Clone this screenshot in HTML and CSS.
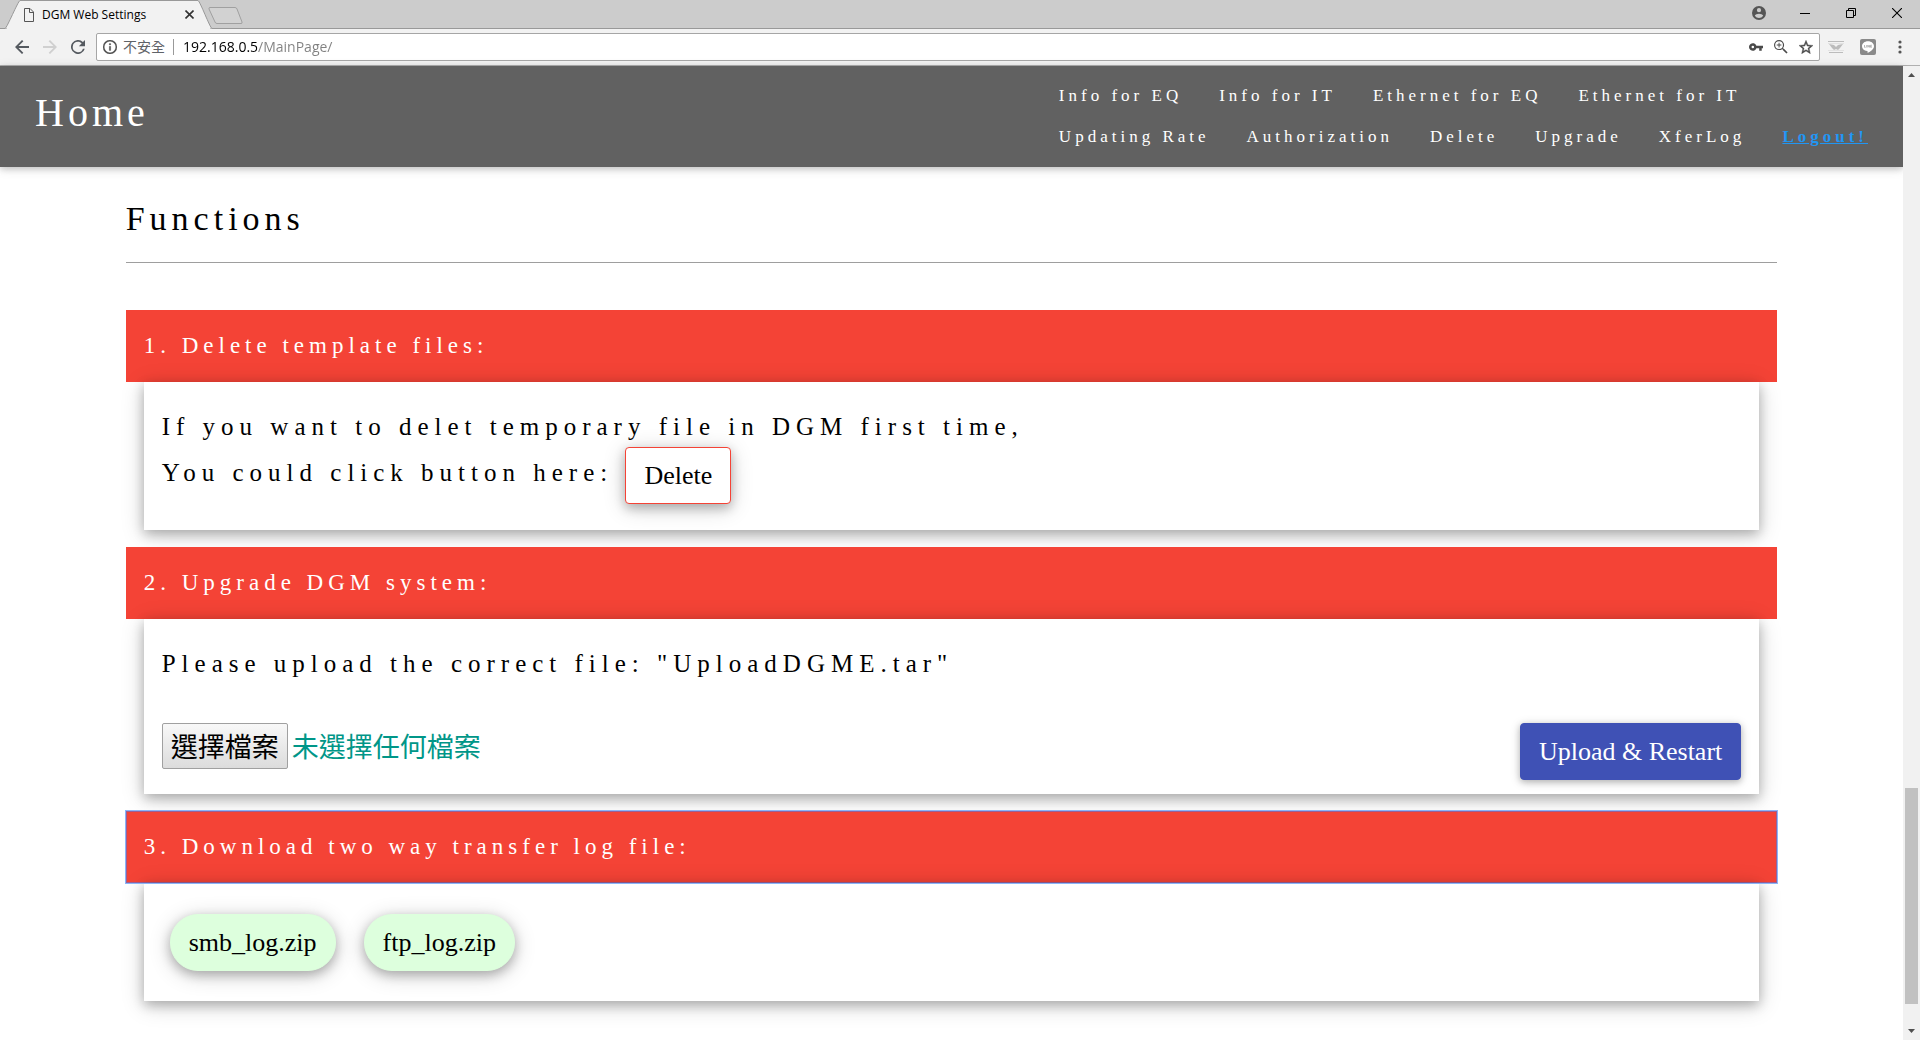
FILE: index.html
```html
<!DOCTYPE html>
<html lang="en">
<head>
<meta charset="utf-8">
<title>DGM Web Settings</title>
<link rel="stylesheet" href="styles.css">
</head>
<body>
<div class="tabstrip">
  <div class="tab">
    <svg class="tab-shape" width="207" height="29" viewBox="0 0 207 29"><path d="M0 28.500C2 28 13 1 15 .500H193C195 1 205 28 207 28.500" fill="#f2f2f2" stroke="#999"/><path d="M2 28.500H205" stroke="#f2f2f2"/></svg>
    <svg class="tab-page" width="12" height="14" viewBox="0 0 12 14" fill="none" stroke="#555"><path d="M1.500.500H7L10.500 4V13.500H1.500ZM6.500.500V4.500H10.500"/></svg>
    <span class="tab-title">DGM Web Settings</span>
    <button class="icon-btn tab-close" aria-label="Close tab"><svg width="9" height="9" viewBox="0 0 9 9" stroke="#333" stroke-width="1.600"><path d="M.5.500 8.500 8.500M8.500.500.5 8.500"/></svg></button>
  </div>
  <button class="icon-btn new-tab" aria-label="New tab"><svg width="36" height="18" viewBox="0 0 36 18"><path d="M2 .500H27Q28.500.500 29 2L34 15Q34.500 16.500 33 16.500H9Q7.500 16.500 7 15L1 2Q.500.500 2 .500Z" fill="#d2d2d2" stroke="#a0a0a0"/></svg></button>
  <div class="window-controls">
    <button class="icon-btn" aria-label="Profile"><svg width="14" height="14" viewBox="2 2 20 20" fill="#555"><path d="M12 2a10 10 0 1 0 0 20 10 10 0 0 0 0-20zm0 3a3 3 0 1 1 0 6 3 3 0 0 1 0-6zm0 14.200a7.200 7.200 0 0 1-6-3.220c.03-1.990 4-3.080 6-3.080s5.970 1.090 6 3.080a7.200 7.200 0 0 1-6 3.220z"/></svg></button>
    <button class="icon-btn" aria-label="Minimize"><svg width="10" height="10" viewBox="0 0 10 10" stroke="#000"><path d="M0 5.500H10"/></svg></button>
    <button class="icon-btn" aria-label="Restore"><svg width="10" height="10" viewBox="0 0 10 10" fill="none" stroke="#000"><path d="M.500 2.500H7.500V9.500H.500ZM2.500 2.500V.500H9.500V7.500H7.500"/></svg></button>
    <button class="icon-btn" aria-label="Close"><svg width="10" height="10" viewBox="0 0 10 10" stroke="#000" stroke-width="1.100"><path d="M0 0 10 10M10 0 0 10"/></svg></button>
  </div>
</div>
<div class="toolbar">
  <div class="nav-buttons">
    <button class="icon-btn" aria-label="Back"><svg width="14" height="14" viewBox="4 4 16 16" fill="#555a60"><path d="M20 10.900H8.100l5.500-5.500L12 4l-8 8 8 8 1.500-1.500-5.400-5.400H20z"/></svg></button>
    <button class="icon-btn" aria-label="Forward"><svg width="14" height="14" viewBox="4 4 16 16" fill="#d0d0d0"><path d="M4 10.900h11.900l-5.500-5.500L12 4l8 8-8 8-1.500-1.500 5.400-5.400H4z"/></svg></button>
    <button class="icon-btn" aria-label="Reload"><svg width="14" height="14" viewBox="4 4 16 16" fill="#555a60"><path d="M17.650 6.350A8 8 0 1 0 19.730 14h-2.080A6 6 0 1 1 12 6c1.660 0 3.140.690 4.220 1.780L13 11h7V4z"/></svg></button>
  </div>
  <div class="omnibox">
    <svg width="14" height="14" viewBox="2 2 20 20" fill="#4a4a4a"><path d="M11 17h2v-6h-2v6zm1-15a10 10 0 1 0 0 20 10 10 0 0 0 0-20zm0 18.200a8.200 8.200 0 1 1 0-16.400 8.200 8.200 0 0 1 0 16.400zM11 9h2V7h-2v2z" stroke="#4a4a4a" stroke-width=".4"/></svg>
    <span class="insecure" lang="zh-TW">不安全</span>
    <input class="url" type="text" aria-label="Address" value="192.168.0.5/MainPage/">
    <div class="omnibox-actions">
      <button class="icon-btn" aria-label="Saved password"><svg width="14" height="8" viewBox="1 6 22 12" fill="#4a4a4a"><path d="M12.650 10A6 6 0 1 0 12.650 14H17v4h4v-4h2v-4zM7 14a2 2 0 1 1 0-4 2 2 0 0 1 0 4z"/></svg></button>
      <button class="icon-btn" aria-label="Zoom"><svg width="14" height="14" viewBox="3 3 18 18" fill="#4a4a4a"><path d="M15.500 14h-.79l-.28-.27A6.470 6.470 0 0 0 16 9.500 6.500 6.500 0 1 0 9.500 16c1.610 0 3.090-.59 4.230-1.570l.27.28v.79l5 4.990L20.490 19zm-6 0.500a5 5 0 1 1 0-10 5 5 0 0 1 0 10zM12.500 8.900h-2.400V6.500H8.900v2.400H6.500v1.200h2.400v2.400h1.200v-2.400h2.400z"/></svg></button>
      <button class="icon-btn" aria-label="Bookmark"><svg width="14" height="14" viewBox="2 2 20 19" fill="#4a4a4a" stroke="#4a4a4a" stroke-width=".6"><path d="m22 9.240-7.190-.62L12 2 9.190 8.630 2 9.240l5.460 4.730L5.820 21 12 17.270 18.180 21l-1.630-7.030zM12 15.400l-3.760 2.270 1-4.280-3.320-2.880 4.380-.38L12 6.100l1.710 4.040 4.380.38-3.320 2.880 1 4.280z"/></svg></button>
    </div>
  </div>
  <div class="extensions">
    <button class="icon-btn" aria-label="Extension"><svg width="16" height="12" viewBox="0 0 16 12" fill="#bcbcbc"><path d="M0 0H16V1H0ZM1 11H15V12H1ZM1 3 6 4 8 6 10 4 15 3 12 7 10 9 8 8 6 9 4 7Z"/><path d="M0 2.500H16M0 9.500H16" stroke="#e2e2e2"/></svg></button>
    <button class="icon-btn" aria-label="LINE"><svg width="16" height="16" viewBox="0 0 16 16"><rect width="16" height="16" rx="2" fill="#8a8a8a"/><path d="M8 2.300C4.500 2.300 2 4.600 2 7.300c0 2.500 2 4.300 5 4.800.8.100.7.700.6 1.900 2-.9 6.400-3.400 6.400-6.700 0-2.700-2.500-5-6-5z" fill="#fff"/><path d="M4.500 6V8.300H5.700M6.700 6V8.500M7.900 8.500V6.200L9.400 8.300V6M11.800 6.200H10.600V8.300H11.800M10.600 7.250H11.700" fill="none" stroke="#8a8a8a" stroke-width=".6"/></svg></button>
    <button class="icon-btn" aria-label="Menu"><svg width="4" height="14" viewBox="0 0 4 14" fill="#555"><circle cx="2" cy="2" r="1.600"/><circle cx="2" cy="7" r="1.600"/><circle cx="2" cy="12" r="1.600"/></svg></button>
  </div>
</div>
<div class="viewport">
  <div class="page">
    <header class="site-header">
      <a class="brand" href="#home">Home</a>
      <nav class="menu">
        <div class="menu-row">
          <a href="#info-eq">Info for EQ</a>
          <a href="#info-it">Info for IT</a>
          <a href="#eth-eq">Ethernet for EQ</a>
          <a href="#eth-it">Ethernet for IT</a>
        </div>
        <div class="menu-row">
          <a href="#rate">Updating Rate</a>
          <a href="#auth">Authorization</a>
          <a href="#delete">Delete</a>
          <a href="#upgrade">Upgrade</a>
          <a href="#xferlog">XferLog</a>
          <a class="logout" href="#logout">Logout!</a>
        </div>
      </nav>
    </header>
    <main class="content">
      <h1 class="title">Functions</h1>
      <section class="function" id="delete">
        <button class="bar" aria-expanded="true">1. Delete template files:</button>
        <div class="panel">
          <p class="copy">If you want to delet temporary file in DGM first time,<br>You could click button here: <button class="btn btn-delete">Delete</button></p>
        </div>
      </section>
      <section class="function" id="upgrade">
        <button class="bar" aria-expanded="true">2. Upgrade DGM system:</button>
        <div class="panel panel-upload">
          <p class="copy">Please upload the correct file: "UploadDGME.tar"</p>
          <div class="upload-row">
            <div class="file" lang="zh-TW">
              <input class="file-input" type="file" id="firmware">
              <label class="file-button" for="firmware">選擇檔案</label>
              <span class="file-status">未選擇任何檔案</span>
            </div>
            <button class="btn btn-upload">Upload &amp; Restart</button>
          </div>
        </div>
      </section>
      <section class="function" id="xferlog">
        <button class="bar bar-focused" aria-expanded="true">3. Download two way transfer log file:</button>
        <div class="panel panel-logs">
          <a class="btn btn-log" href="#smb_log.zip">smb_log.zip</a>
          <a class="btn btn-log" href="#ftp_log.zip">ftp_log.zip</a>
        </div>
      </section>
    </main>
  </div>
  <div class="scrollbar">
    <svg width="17" height="17" viewBox="0 0 17 17" fill="#505050"><path d="M5 11 8.500 7 12 11Z"/></svg>
    <div class="thumb"></div>
    <svg class="scroll-down" width="17" height="17" viewBox="0 0 17 17" fill="#505050"><path d="M5 6 8.500 10 12 6Z"/></svg>
  </div>
</div>
</body>
</html>
```
FILE: styles.css
```css
* { box-sizing: border-box; }

body {
  margin: 0;
  min-height: 100vh;
  display: flex;
  flex-direction: column;
  background: #fff;
  color: #000;
  font-family: "Liberation Serif", "Noto Sans CJK TC", serif;
}

svg { display: block; flex: none; }
button { font-family: inherit; cursor: pointer; }

.icon-btn {
  display: flex;
  align-items: center;
  justify-content: center;
  padding: 0;
  border: 0;
  background: none;
}

/* Browser frame */
.tabstrip {
  display: flex;
  height: 29px;
  padding-left: 5px;
  background: #ccc;
  border-bottom: 1px solid #999;
  font-family: "Open Sans", sans-serif;
}
.tab {
  position: relative;
  display: flex;
  align-items: center;
  width: 207px;
  height: 29px;
  padding: 0 18px;
}
.tab-shape { position: absolute; left: 0; top: 0; }
.tab-page, .tab-title, .tab-close { position: relative; }
.tab-title { flex: 1; margin-left: 7px; font-size: 12px; white-space: nowrap; }
.new-tab { align-items: flex-start; padding-top: 7px; margin-left: -4px; }
.window-controls {
  display: flex;
  align-items: center;
  margin-left: auto;
  height: 26px;
}
.window-controls .icon-btn { width: 46px; height: 26px; }

.toolbar {
  display: flex;
  align-items: center;
  height: 37px;
  padding: 0 4px 0 8px;
  background: #f2f2f2;
  border-bottom: 1px solid #b0b0b0;
  font-family: "Open Sans", "Noto Sans CJK TC", sans-serif;
}
.nav-buttons { display: flex; }
.nav-buttons .icon-btn { width: 28px; height: 28px; }
.omnibox {
  flex: 1;
  display: flex;
  align-items: center;
  height: 28px;
  margin-left: 4px;
  padding: 0 6px;
  border: 1px solid #a6a6a6;
  border-radius: 2px;
  background: #fff;
}
.insecure {
  margin-left: 6px;
  padding-right: 8px;
  border-right: 1px solid #999;
  color: #5f6368;
  font-size: 14px;
  line-height: 16px;
}
/* host in black, path in grey */
.url {
  flex: 1;
  min-width: 0;
  margin-left: 9px;
  padding: 0;
  border: 0;
  outline: 0;
  font: 14px/20px "Open Sans", sans-serif;
  color: transparent;
  background: linear-gradient(90deg, #000 74px, #808080 74px);
  -webkit-background-clip: text;
  background-clip: text;
}
.omnibox-actions { display: flex; gap: 11px; }
.extensions { display: flex; align-items: center; }
.extensions .icon-btn { width: 32px; height: 28px; }

.viewport { flex: 1; display: flex; }
.page { flex: 1; min-width: 0; }
.scrollbar {
  width: 17px;
  display: grid;
  grid-template-rows: 17px 705fr 216fr 19fr 17px;
  background: #f1f1f1;
}
.thumb { grid-row: 3; margin: 0 2px; background: #c1c1c1; }
.scroll-down { grid-row: 5; }

/* Site header */
.site-header {
  display: flex;
  align-items: center;
  justify-content: space-between;
  padding: 9px 35px 10px;
  background: #616161;
  color: #fff;
  letter-spacing: 4px;
  box-shadow: 0 2px 6px rgba(0, 0, 0, .16), 0 2px 11px rgba(0, 0, 0, .12);
}
.site-header a { color: #fff; text-decoration: none; }
.brand { font-size: 40px; line-height: 60px; padding-bottom: 6px; }
.menu-row { display: flex; gap: 37px; }
.menu a { padding: 8px 0; font-size: 17px; line-height: 25px; }
.menu a.logout { color: #2196f3; font-weight: bold; text-decoration: underline; }

/* Content */
.content {
  width: 87%;
  min-width: 1200px;
  margin: 0 auto;
  padding: 27px 2px 20px;
}
.title {
  margin: 0 0 47px;
  padding-bottom: 18px;
  border-bottom: 1px solid #9e9e9e;
  font-size: 34px;
  font-weight: 400;
  line-height: 50px;
  letter-spacing: 5px;
}
.function + .function { margin-top: 17px; }
.bar {
  display: block;
  width: 100%;
  padding: 18px;
  border: 0;
  background: #f44336;
  color: #fff;
  font-size: 23px;
  line-height: 36px;
  letter-spacing: 5px;
  text-align: left;
}
.bar-focused {
  outline: 1px solid #8ab6fa;
  box-shadow: inset 0 0 0 1px #9a6096;
}
.panel {
  margin: 0 18px;
  padding: 25px 18px 26px;
  background: #fff;
  box-shadow: 0 4px 11px rgba(0, 0, 0, .24), 0 4px 22px rgba(0, 0, 0, .19);
}
.copy {
  margin: 0;
  font-size: 25px;
  line-height: 40px;
  letter-spacing: 6px;
}
.btn {
  display: inline-block;
  vertical-align: middle;
  padding: 8px 18px;
  border: 1px solid transparent;
  border-radius: 4px;
  color: #000;
  font-size: 26px;
  line-height: 39px;
  text-decoration: none;
}
.btn-delete {
  border-color: #f44336;
  background: #fff;
  box-shadow: 0 4px 11px rgba(0, 0, 0, .24), 0 4px 22px rgba(0, 0, 0, .19);
}
.btn-upload {
  border-color: #3f51b5;
  background: #3f51b5;
  color: #fff;
  box-shadow: 0 2px 6px rgba(0, 0, 0, .2), 0 2px 11px rgba(0, 0, 0, .16);
}
.panel-upload { padding-bottom: 14px; }
.upload-row {
  display: flex;
  align-items: flex-start;
  justify-content: space-between;
  margin-top: 39px;
}
.file {
  position: relative;
  display: flex;
  align-items: center;
  gap: 4px;
  color: #009688;
  font-family: "Noto Sans CJK TC", sans-serif;
  font-size: 27px;
  line-height: 44px;
}
.file-input { position: absolute; width: 1px; height: 1px; opacity: 0; }
.file-button {
  padding: 0 8px;
  border: 1px solid #a0a0a0;
  border-radius: 2px;
  background: linear-gradient(#f8f8f8, #dcdcdc);
  color: #000;
}
.panel-logs {
  display: flex;
  gap: 28px;
  padding: 31px 26px 30px;
}
.btn-log {
  border-color: #dfd;
  border-radius: 28px;
  background: #dfd;
  box-shadow: 0 4px 11px rgba(0, 0, 0, .24), 0 4px 22px rgba(0, 0, 0, .19);
}
```
